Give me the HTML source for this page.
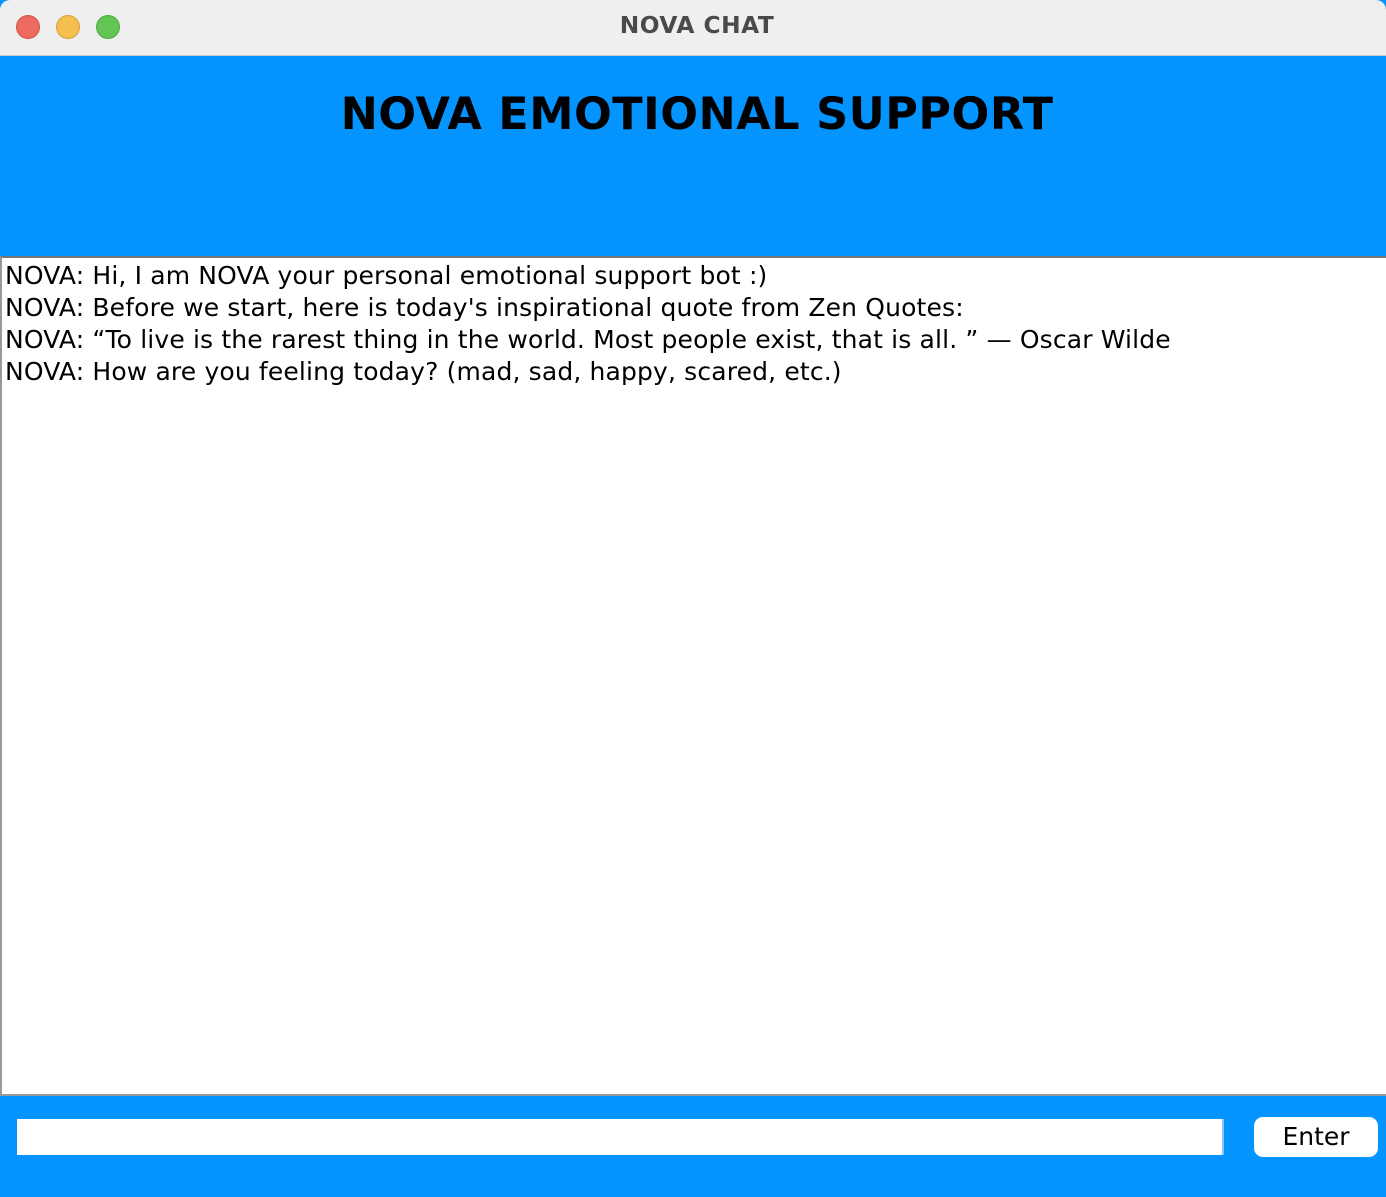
<!DOCTYPE html>
<html><head><meta charset="utf-8"><style>
*{margin:0;padding:0;box-sizing:border-box}
body{width:1386px;height:1197px;overflow:hidden;background:#0494ff;font-family:"DejaVu Sans","Liberation Sans",sans-serif;position:relative}
.tb{position:absolute;left:0;top:0;width:1386px;height:56px;background:#efefef;border-bottom:1px solid #c9c9c9;border-radius:10px 10px 0 0}
.dot{position:absolute;top:15px;width:24px;height:24px;border-radius:50%}
.tt{position:absolute;left:8px;right:0;top:12px;text-align:center;font:bold 23.3px "DejaVu Sans",sans-serif;color:#4a4a4a;letter-spacing:0.5px}
.hd{position:absolute;left:0;top:56px;width:1386px;height:200px;background:#0494ff}
.h1{position:absolute;left:8px;right:0;top:84px;text-align:center;font:bold 44.5px "DejaVu Sans",sans-serif;color:#000;letter-spacing:0.5px}
.ta{position:absolute;left:0;top:256px;width:1386px;height:840px;background:#fff;border-top:2px solid #777;border-left:2px solid #999;border-bottom:2px solid #999}
.ta div{font-size:25px;line-height:32px;color:#000;white-space:nowrap;padding-left:3px;letter-spacing:0.15px}
.in{position:absolute;left:17px;top:1119px;width:1207px;height:36px;background:#fff;border-right:2px solid #8fc4f2}
.bt{position:absolute;left:1254px;top:1117px;width:124px;height:40px;background:#fff;border-radius:9px;text-align:center;font-size:25px;line-height:40px;color:#000}
</style></head><body>
<div class="tb">
<div class="dot" style="left:16px;background:#ed6a5e;border:1px solid #d25246"></div>
<div class="dot" style="left:56px;background:#f5bf4f;border:1px solid #d6a13a"></div>
<div class="dot" style="left:96px;background:#62c554;border:1px solid #4ea93f"></div>
<div class="tt">NOVA CHAT</div>
</div>
<div class="hd"><div class="h1" style="top:33px">NOVA EMOTIONAL SUPPORT</div></div>
<div class="ta" style="padding-top:2px">
<div>NOVA: Hi, I am NOVA your personal emotional support bot :)</div>
<div>NOVA: Before we start, here is today's inspirational quote from Zen Quotes:</div>
<div>NOVA: “To live is the rarest thing in the world. Most people exist, that is all. ” — Oscar Wilde</div>
<div>NOVA: How are you feeling today? (mad, sad, happy, scared, etc.)</div>
</div>
<div class="in"></div>
<div class="bt">Enter</div>
</body></html>
